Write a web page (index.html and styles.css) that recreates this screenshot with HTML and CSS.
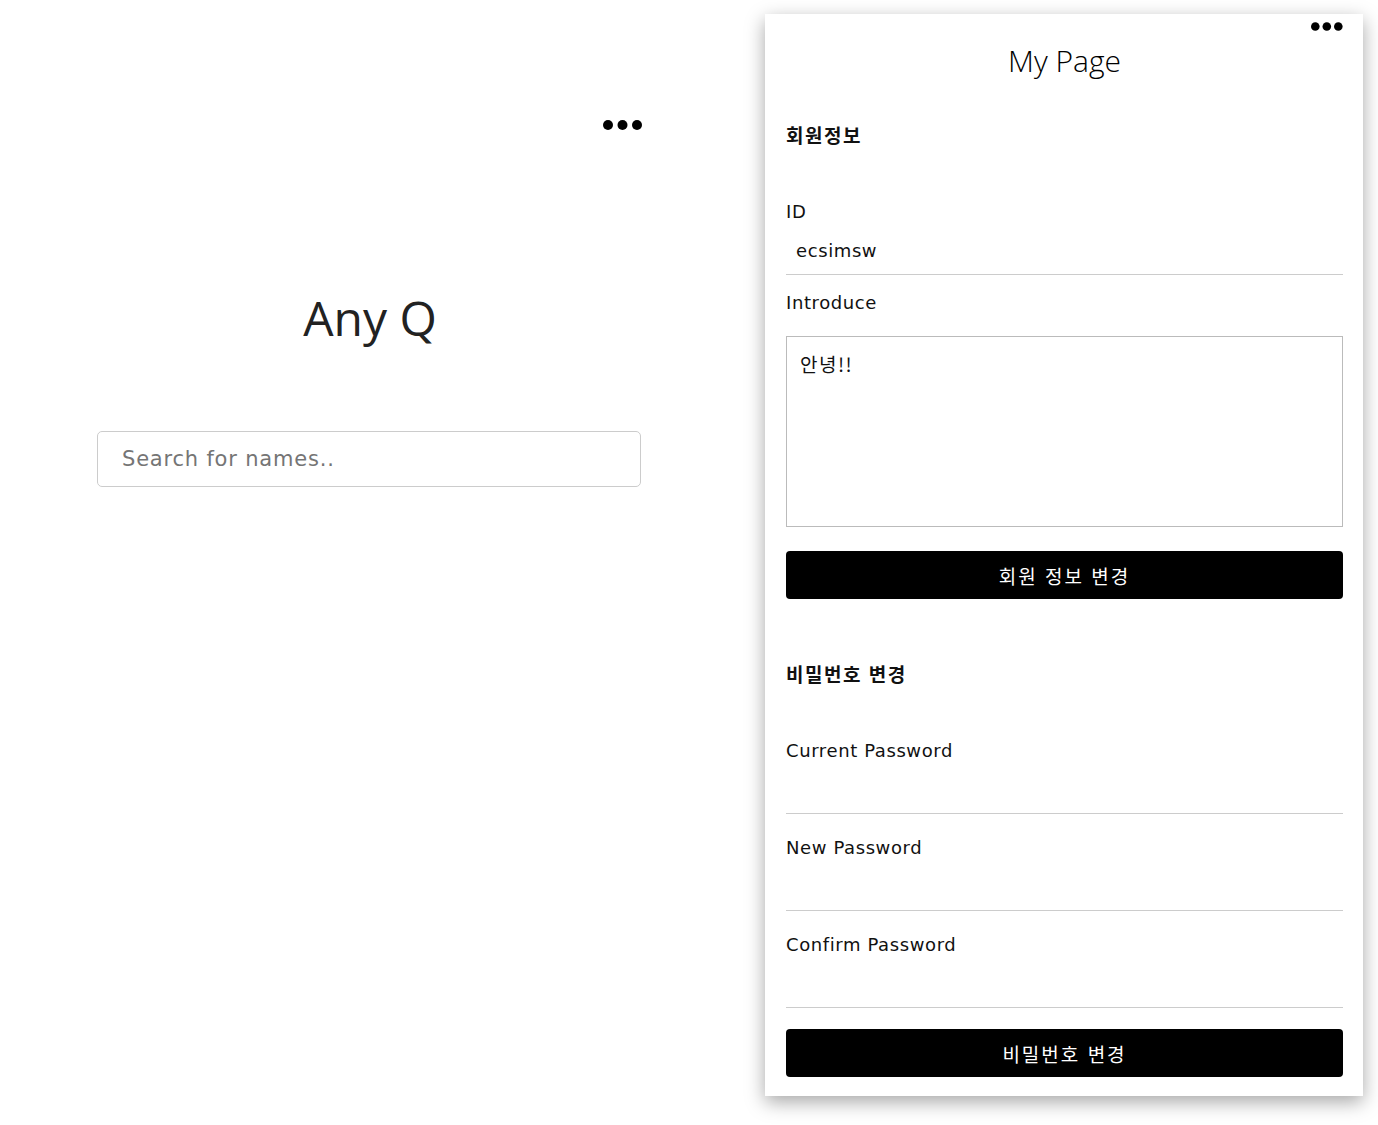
FILE: index.html
```html
<!DOCTYPE html>
<html lang="ko">
	<head>
		<meta charset="UTF-8" />
		<meta name="viewport" content="width=device-width, initial-scale=1.0" />
		<link rel="stylesheet" href="styles.css">
	</head>
	<body>
		<!-- Home -->
		<div class="home">
			<div class="home-menu">
				<svg class="dots dots-big" viewBox="0 0 40 10" width="40" height="10">
					<circle cx="5" cy="5" r="5" />
					<circle cx="19.5" cy="5" r="5" />
					<circle cx="34" cy="5" r="5" />
				</svg>
			</div>
			<h1 class="logo">Any Q</h1>
			<input class="search" type="text" placeholder="Search for names.." />
		</div>

		<!-- My Page -->
		<div class="mypage">
			<div class="mypage-menu">
				<svg class="dots" viewBox="0 0 32 9" width="32" height="9">
					<circle cx="4.3" cy="4.5" r="4.3" />
					<circle cx="15.8" cy="4.5" r="4.3" />
					<circle cx="27.3" cy="4.5" r="4.3" />
				</svg>
			</div>
			<h1 class="mypage-title">My Page</h1>

			<h2 class="section-title">회원정보</h2>
			<div class="field">
				<div class="field-label">ID</div>
				<div class="field-value">ecsimsw</div>
			</div>
			<div class="field field-intro">
				<div class="field-label">Introduce</div>
				<textarea class="intro">안녕!!</textarea>
			</div>
			<button class="btn btn-info">회원 정보 변경</button>

			<h2 class="section-title section-pw">비밀번호 변경</h2>
			<div class="field">
				<div class="field-label">Current Password</div>
				<input class="field-input" type="password" />
			</div>
			<div class="field field-pw">
				<div class="field-label">New Password</div>
				<input class="field-input" type="password" />
			</div>
			<div class="field field-pw">
				<div class="field-label">Confirm Password</div>
				<input class="field-input" type="password" />
			</div>
			<button class="btn btn-pw">비밀번호 변경</button>
		</div>
	</body>
</html>
```

FILE: styles.css
```css
body {
	margin: 0;
	min-height: 1125px;
	display: flex;
	align-items: flex-start;
	background: #ffffff;
	color: #111111;
	font-family: "DejaVu Sans", "Noto Sans CJK KR", sans-serif;
}

.dots {
	display: block;
	fill: #000000;
}

/* Home */
.home {
	width: 544px;
	margin-left: 97px;
	padding-top: 120px;
	display: flex;
	flex-direction: column;
}

.home-menu {
	display: flex;
	justify-content: flex-end;
	margin-right: -2px;
}

.logo {
	margin: 164px 0 0;
	font-family: "Open Sans", sans-serif;
	font-weight: 400;
	font-size: 48px;
	line-height: 48px;
	text-align: center;
	color: #222222;
	padding-left: 2px;
}

.search {
	margin-top: 89px;
	box-sizing: border-box;
	width: 544px;
	height: 56px;
	border: 1.5px solid #cccccc;
	border-radius: 5px;
	padding: 0 24px;
	font-family: "DejaVu Sans", sans-serif;
	font-size: 21px;
	letter-spacing: 0.8px;
	outline: none;
}

.search::placeholder {
	color: #757575;
}

/* My Page */
.mypage {
	width: 598px;
	box-sizing: border-box;
	margin: 14px 0 0 124px;
	padding: 8px 20px 19px 21px;
	background: #ffffff;
	box-shadow: 0 6px 18px rgba(0, 0, 0, 0.35);
}

.mypage-menu {
	display: flex;
	justify-content: flex-end;
}

.mypage-title {
	margin: 10px 0 0;
	font-family: "Open Sans", sans-serif;
	font-weight: 300;
	font-size: 30px;
	line-height: 40px;
	text-align: center;
	color: #000000;
}

.section-title {
	margin: 42px 0 0;
	font-family: "Noto Sans CJK KR", sans-serif;
	font-size: 19px;
	font-weight: 700;
	line-height: 24px;
	letter-spacing: 1.5px;
}

.section-pw {
	margin-top: 63px;
}

.field {
	margin-top: 53px;
}

.field-intro {
	margin-top: 16px;
}

.field-pw {
	margin-top: 22px;
}

.field-label {
	font-size: 18px;
	line-height: 24px;
	letter-spacing: 0.6px;
}

.field-value {
	padding: 15px 10px 11px;
	font-size: 18px;
	line-height: 24px;
	letter-spacing: 0.6px;
	border-bottom: 1.5px solid #cccccc;
}

.field-input {
	display: block;
	box-sizing: border-box;
	width: 100%;
	height: 51px;
	border: none;
	border-bottom: 1.5px solid #cccccc;
	outline: none;
	background: transparent;
}

.intro {
	display: block;
	box-sizing: border-box;
	width: 100%;
	height: 191px;
	margin-top: 21px;
	padding: 15px 13px;
	border: 1.5px solid #bbbbbb;
	resize: none;
	font-family: "Noto Sans CJK KR", sans-serif;
	font-size: 19px;
	line-height: 24px;
	letter-spacing: 1.5px;
	color: #111111;
	outline: none;
}

.btn {
	display: block;
	width: 100%;
	height: 48px;
	border: none;
	border-radius: 4px;
	background: #000000;
	color: #ffffff;
	font-family: "Noto Sans CJK KR", sans-serif;
	font-size: 19px;
	letter-spacing: 2px;
	cursor: pointer;
}

.btn-info {
	margin-top: 24px;
}

.btn-pw {
	margin-top: 21px;
}
```
